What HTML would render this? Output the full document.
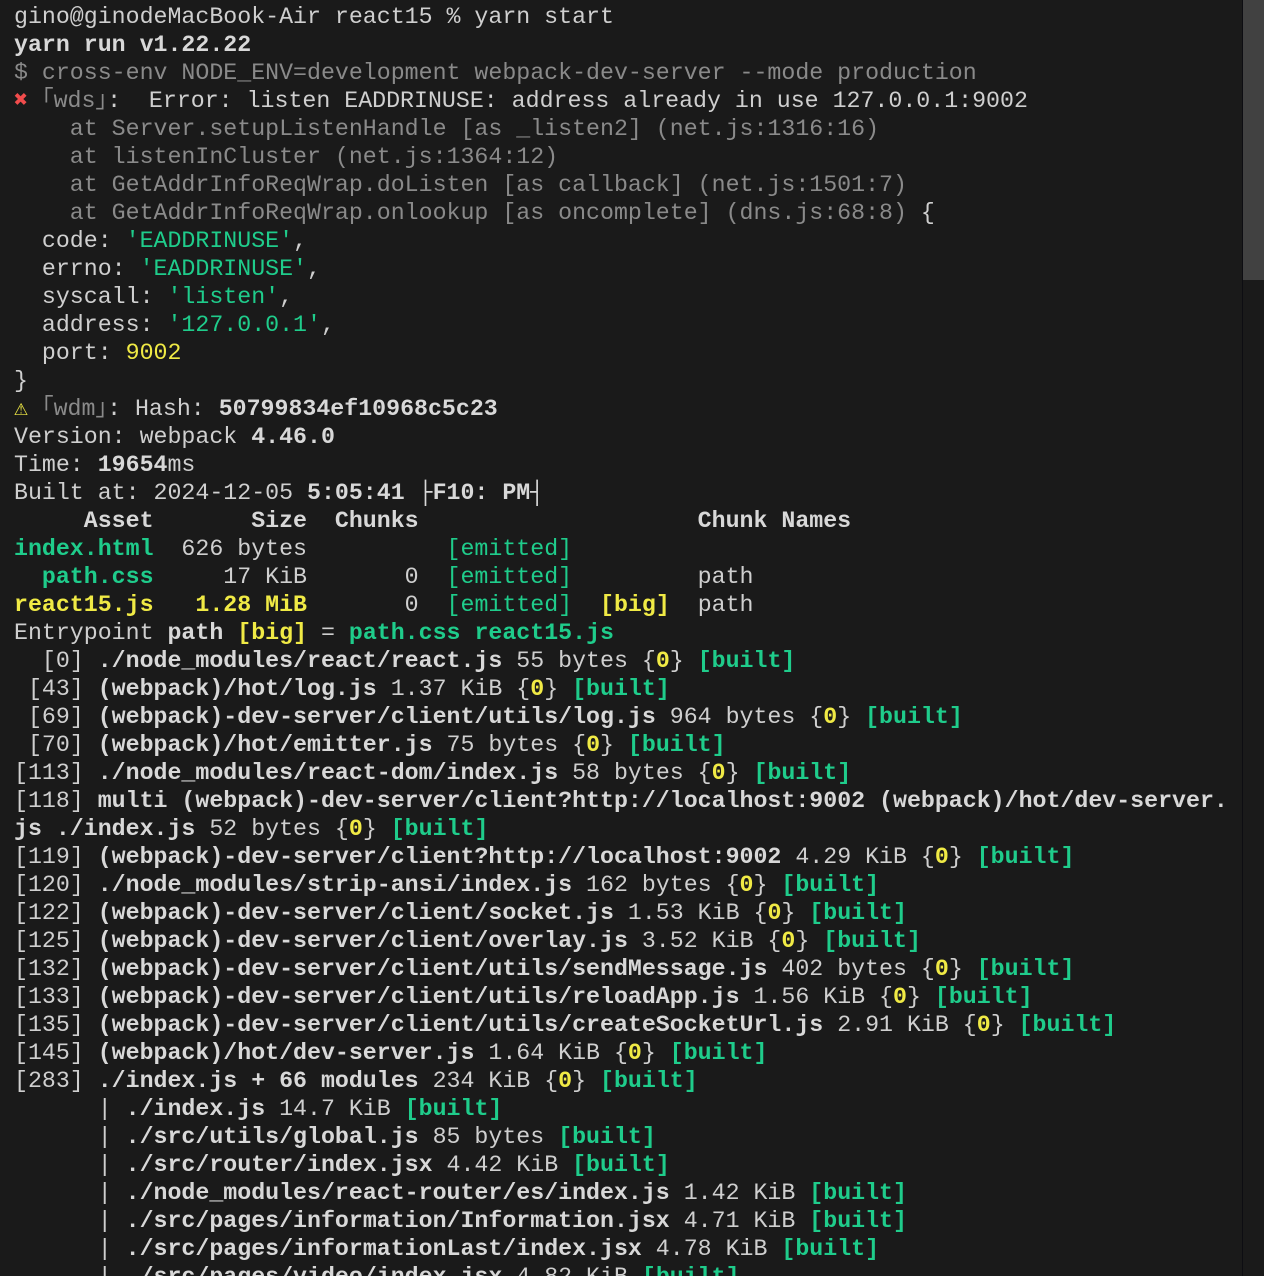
<!DOCTYPE html>
<html><head><meta charset="utf-8"><style>
html,body{margin:0;padding:0;background:#1a1a1a;width:1264px;height:1276px;overflow:hidden}
pre{margin:0;padding:3px 0 0 14px;font-family:"Liberation Mono","DejaVu Sans Mono",monospace;font-size:23.25px;line-height:28px;color:#cfcfcf;white-space:pre}
b{font-weight:bold;color:#d8d8d8}
.d{color:#8a8a8a}.g{color:#1fcc8b}.y{color:#f0ea45}.r{color:#f14c4c}
.sb{position:absolute;left:1242px;top:0;width:1px;height:1276px;background:#0d0d12}
.th{position:absolute;left:1243px;top:0;width:21px;height:280px;background:#414141}
.br{display:inline-block;width:28px}
</style></head><body>
<div class="sb"></div><div class="th"></div>
<pre>gino@ginodeMacBook-Air react15 % yarn start
<b>yarn run v1.22.22</b>
<span class="d">$ cross-env NODE_ENV=development webpack-dev-server --mode production</span>
<span class="r">✖</span> <span class="d">｢wds｣</span>:  Error: listen EADDRINUSE: address already in use 127.0.0.1:9002
<span class="d">    at Server.setupListenHandle [as _listen2] (net.js:1316:16)
    at listenInCluster (net.js:1364:12)
    at GetAddrInfoReqWrap.doListen [as callback] (net.js:1501:7)
    at GetAddrInfoReqWrap.onlookup [as oncomplete] (dns.js:68:8)</span> {
  code: <span class="g">'EADDRINUSE'</span>,
  errno: <span class="g">'EADDRINUSE'</span>,
  syscall: <span class="g">'listen'</span>,
  address: <span class="g">'127.0.0.1'</span>,
  port: <span class="y">9002</span>
}
<span class="y">⚠</span> <span class="d">｢wdm｣</span>: Hash: <b>50799834ef10968c5c23</b>
Version: webpack <b>4.46.0</b>
Time: <b>19654</b>ms
Built at: 2024-12-05 <b>5:05:41 ├F10: PM┤</b>
<b>     Asset       Size  Chunks                    Chunk Names</b>
<b class="g">index.html</b>  626 bytes          <span class="g">[emitted]</span>
  <b class="g">path.css</b>     17 KiB       0  <span class="g">[emitted]</span>         path
<b class="y">react15.js</b>   <b class="y">1.28 MiB</b>       0  <span class="g">[emitted]</span>  <b class="y">[big]</b>  path
Entrypoint <b>path</b> <b class="y">[big]</b> = <b class="g">path.css</b> <b class="g">react15.js</b>
  [0] <b>./node_modules/react/react.js</b> 55 bytes {<b class="y">0</b>} <b class="g">[built]</b>
 [43] <b>(webpack)/hot/log.js</b> 1.37 KiB {<b class="y">0</b>} <b class="g">[built]</b>
 [69] <b>(webpack)-dev-server/client/utils/log.js</b> 964 bytes {<b class="y">0</b>} <b class="g">[built]</b>
 [70] <b>(webpack)/hot/emitter.js</b> 75 bytes {<b class="y">0</b>} <b class="g">[built]</b>
[113] <b>./node_modules/react-dom/index.js</b> 58 bytes {<b class="y">0</b>} <b class="g">[built]</b>
[118] <b>multi (webpack)-dev-server/client?http://localhost:9002 (webpack)/hot/dev-server.
js ./index.js</b> 52 bytes {<b class="y">0</b>} <b class="g">[built]</b>
[119] <b>(webpack)-dev-server/client?http://localhost:9002</b> 4.29 KiB {<b class="y">0</b>} <b class="g">[built]</b>
[120] <b>./node_modules/strip-ansi/index.js</b> 162 bytes {<b class="y">0</b>} <b class="g">[built]</b>
[122] <b>(webpack)-dev-server/client/socket.js</b> 1.53 KiB {<b class="y">0</b>} <b class="g">[built]</b>
[125] <b>(webpack)-dev-server/client/overlay.js</b> 3.52 KiB {<b class="y">0</b>} <b class="g">[built]</b>
[132] <b>(webpack)-dev-server/client/utils/sendMessage.js</b> 402 bytes {<b class="y">0</b>} <b class="g">[built]</b>
[133] <b>(webpack)-dev-server/client/utils/reloadApp.js</b> 1.56 KiB {<b class="y">0</b>} <b class="g">[built]</b>
[135] <b>(webpack)-dev-server/client/utils/createSocketUrl.js</b> 2.91 KiB {<b class="y">0</b>} <b class="g">[built]</b>
[145] <b>(webpack)/hot/dev-server.js</b> 1.64 KiB {<b class="y">0</b>} <b class="g">[built]</b>
[283] <b>./index.js + 66 modules</b> 234 KiB {<b class="y">0</b>} <b class="g">[built]</b>
      | <b>./index.js</b> 14.7 KiB <b class="g">[built]</b>
      | <b>./src/utils/global.js</b> 85 bytes <b class="g">[built]</b>
      | <b>./src/router/index.jsx</b> 4.42 KiB <b class="g">[built]</b>
      | <b>./node_modules/react-router/es/index.js</b> 1.42 KiB <b class="g">[built]</b>
      | <b>./src/pages/information/Information.jsx</b> 4.71 KiB <b class="g">[built]</b>
      | <b>./src/pages/informationLast/index.jsx</b> 4.78 KiB <b class="g">[built]</b>
      | <b>./src/pages/video/index.jsx</b> 4.82 KiB <b class="g">[built]</b></pre>
</body></html>
